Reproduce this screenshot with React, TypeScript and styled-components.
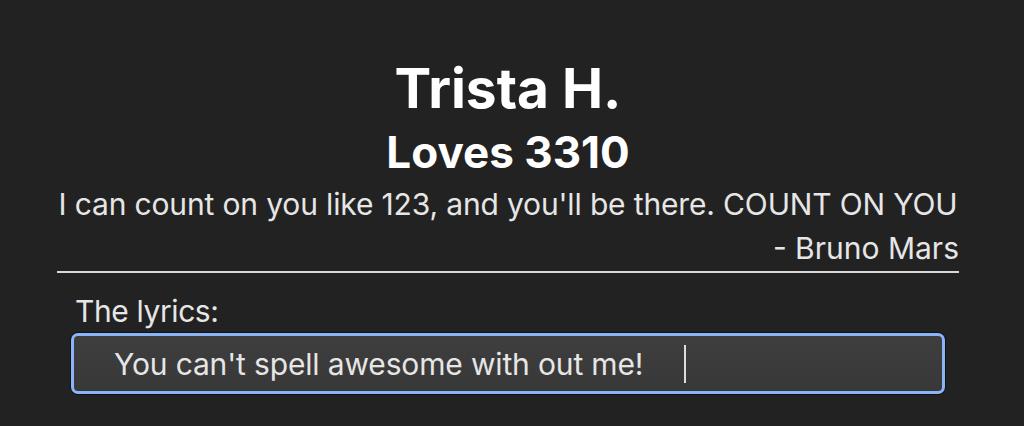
import React from "react";
import styled, { createGlobalStyle } from "styled-components";

const Global = createGlobalStyle`
  html, body { margin: 0; padding: 0; background: #222222; }
  body { font-family: Inter, "Noto Sans", "Liberation Sans", sans-serif; color: #e8e8e8; }
`;

const Page = styled.div`
  width: 1024px;
  height: 426px;
  background: #222222;
  overflow: hidden;
  padding-left: 57px;
  box-sizing: border-box;
`;

const Column = styled.main`
  width: 902px;
  display: flex;
  flex-direction: column;
  padding-top: 57px;
`;

const Name = styled.h1`
  margin: 0;
  font-size: 55px;
  line-height: 62px;
  font-weight: 700;
  color: #ffffff;
  text-align: center;
`;

const Subtitle = styled.h2`
  margin: 4px 0 0 0;
  font-size: 44px;
  line-height: 58px;
  font-weight: 700;
  color: #ffffff;
  text-align: center;
`;

const Quote = styled.p`
  margin: 1px 0 0 0;
  font-size: 30px;
  line-height: 44px;
  letter-spacing: -0.15px;
  white-space: nowrap;
  color: #e6e6e6;
  text-align: center;
`;

const Credit = styled.p`
  margin: 0;
  font-size: 30px;
  line-height: 44px;
  color: #e6e6e6;
  text-align: right;
`;

const Divider = styled.hr`
  margin: 1px 0 0 0;
  border: none;
  height: 2px;
  background: #d8d8d8;
`;

const Field = styled.div`
  display: flex;
  flex-direction: column;
  padding: 0 14px;
  margin-top: 20px;
`;

const Label = styled.label`
  font-size: 30px;
  line-height: 36px;
  letter-spacing: -0.4px;
  color: #e6e6e6;
  padding-left: 4px;
`;

const InputBox = styled.div`
  margin-top: 4px;
  height: 61px;
  box-sizing: border-box;
  border: 3px solid #8ab4f8;
  border-radius: 7px;
  box-shadow: 0 0 0 1px #111111;
  background: linear-gradient(#3e3e3e, #383838);
  display: flex;
  align-items: center;
  padding-left: 40px;
  font-size: 30px;
  color: #e6e6e6;
`;

const Value = styled.span`
  white-space: pre;
  letter-spacing: -0.15px;
`;

const Caret = styled.span`
  display: inline-block;
  width: 2px;
  height: 38px;
  background: #dddddd;
  margin-left: 41px;
`;

export default function App() {
  return (
    <>
      <Global />
      <Page>
        <Column>
          <Name>Trista H.</Name>
          <Subtitle>Loves 3310</Subtitle>
          <Quote>I can count on you like 123, and you'll be there. COUNT ON YOU</Quote>
          <Credit>- Bruno Mars</Credit>
          <Divider />
          <Field>
            <Label>The lyrics:</Label>
            <InputBox>
              <Value>You can't spell awesome with out me!</Value>
              <Caret />
            </InputBox>
          </Field>
        </Column>
      </Page>
    </>
  );
}
